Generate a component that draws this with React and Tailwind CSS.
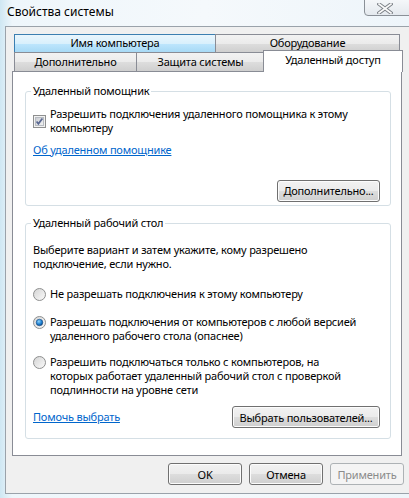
import React from "react";

function Btn({ children, className = "", disabled }) {
  return (
    <button
      className={`h-[22px] rounded-[3px] border text-[11px] leading-none ${
        disabled
          ? "border-[#adb2b5] bg-[#f4f4f4] text-[#8b8b8b]"
          : "border-[#707070] bg-[linear-gradient(#f2f2f2_0%,#ebebeb_48%,#dddddd_52%,#cfcfcf_100%)] text-black shadow-[inset_0_0_0_1px_#fcfcfc]"
      } ${className}`}
    >
      {children}
    </button>
  );
}

function Check() {
  return (
    <svg width="13" height="13" viewBox="0 0 13 13" className="shrink-0">
      <defs>
        <linearGradient id="cbg" x1="0" y1="0" x2="1" y2="1">
          <stop offset="0" stopColor="#c9ccd2" />
          <stop offset="1" stopColor="#f4f4f4" />
        </linearGradient>
      </defs>
      <rect x="0.5" y="0.5" width="12" height="12" fill="#f2f2f2" stroke="#8e8f8f" />
      <rect x="2.5" y="2.5" width="8" height="8" fill="url(#cbg)" stroke="#b8bcc2" />
      <path d="M3.6 6.4 L5.4 8.8 L9.4 3.4" stroke="#5a6892" strokeWidth="1.7" fill="none" />
    </svg>
  );
}

function Radio({ checked }) {
  return (
    <svg width="13" height="13" viewBox="0 0 13 13" className="mt-[1px] shrink-0">
      <defs>
        <linearGradient id="rbg" x1="0" y1="0" x2="1" y2="1">
          <stop offset="0" stopColor="#d3d3d3" />
          <stop offset="1" stopColor="#fbfbfb" />
        </linearGradient>
        <radialGradient id="rdot" cx="0.4" cy="0.35" r="0.7">
          <stop offset="0" stopColor="#8fd3fb" />
          <stop offset="0.6" stopColor="#1b7ed0" />
          <stop offset="1" stopColor="#0a3f78" />
        </radialGradient>
      </defs>
      <circle cx="6.5" cy="6.5" r="6" fill="url(#rbg)" stroke="#8e8f8f" />
      {checked && <circle cx="6.5" cy="6.5" r="3.3" fill="url(#rdot)" stroke="#1c4f86" strokeWidth="0.6" />}
    </svg>
  );
}

function Group({ title, className = "", children }) {
  return (
    <div className={`relative ml-[12px] w-[366px] rounded-[3px] border border-[#d5dfe5] ${className}`}>
      <span className="absolute left-[5px] top-[-8px] bg-white px-[2px] leading-[14px]">{title}</span>
      {children}
    </div>
  );
}

const Link = ({ children }) => (
  <a href="#" className="text-[#0066cc] underline leading-[14px]">
    {children}
  </a>
);

export default function App() {
  return (
    <div className="relative h-[498px] w-[409px] overflow-hidden bg-[linear-gradient(90deg,#cfe7f3_0%,#eef6fb_3%,#f5f9fc_50%,#eef5fa_100%)] font-['Noto_Sans',sans-serif] text-[11px] tracking-[-0.2px] text-black">
      <div className="flex h-[26px] items-center pb-[2px] pl-[7px] text-[12px] tracking-normal [text-shadow:0_0_6px_#fff]">
        Свойства системы
      </div>
      <div className="absolute right-[-4px] top-[-3px] flex h-[19px] w-[49px] items-center justify-center rounded-b-[4px] border border-[#8a9097] bg-[linear-gradient(#f7f9fb,#e4e9ee)] pr-[8px] pt-[3px]">
        <svg width="16" height="11" viewBox="0 0 16 11">
          <path d="M2 1 L14 10 M14 1 L2 10" stroke="#7d8288" strokeWidth="3.6" strokeLinecap="square" />
          <path d="M2 1 L14 10 M14 1 L2 10" stroke="#fbfbfb" strokeWidth="1.6" strokeLinecap="square" />
        </svg>
      </div>

      <div className="ml-[5px] h-[468px] w-[410px] border-b border-l border-t border-[#9aa2aa] bg-[#f0f0f0] pl-[6px] pt-[7px]">
        <div className="ml-[2px] flex h-[18px]">
          <div className="flex w-[202px] items-center justify-center border border-b-0 border-[#3c7fb1] bg-[linear-gradient(#eaf6fd_0%,#d9f0fc_50%,#bee6fd_51%,#a7d9f5_100%)]">
            Имя компьютера
          </div>
          <div className="-ml-px flex w-[185px] items-center justify-center border border-b-0 border-[#898c95] bg-[linear-gradient(#f2f2f2_0%,#ebebeb_50%,#dddddd_51%,#cfcfcf_100%)]">
            Оборудование
          </div>
        </div>
        <div className="ml-[2px] flex h-[19px] items-end">
          <div className="flex h-[19px] w-[123px] items-center justify-center border border-b-0 border-[#898c95] bg-[linear-gradient(#f2f2f2_0%,#ebebeb_50%,#dddddd_51%,#cfcfcf_100%)]">
            Дополнительно
          </div>
          <div className="-ml-px flex h-[19px] w-[129px] items-center justify-center border border-b-0 border-[#898c95] bg-[linear-gradient(#f2f2f2_0%,#ebebeb_50%,#dddddd_51%,#cfcfcf_100%)]">
            Защита системы
          </div>
          <div className="relative z-10 -mb-px -ml-[2px] flex h-[22px] w-[140px] items-center justify-center border border-b-0 border-[#898c95] bg-white pb-[2px]">
            Удаленный доступ
          </div>
        </div>

        <div className="h-[385px] w-[390px] border border-[#898c95] bg-white">
          <Group title="Удаленный помощник" className="mt-[19px] h-[115px]">
            <div className="flex items-center gap-[4px] pl-[7px] pt-[15px]">
              <Check />
              <div className="leading-[14px]">
                Разрешить подключения удаленного помощника к этому
                <br />
                компьютеру
              </div>
            </div>
            <div className="mt-[7px] pl-[7px]">
              <Link>Об удаленном помощнике</Link>
            </div>
            <div className="mr-[10px] mt-[21px] flex justify-end">
              <Btn className="w-[103px]">Дополнительно...</Btn>
            </div>
          </Group>

          <Group title="Удаленный рабочий стол" className="mt-[17px] h-[216px]">
            <div className="pl-[7px] pt-[19px] leading-[14px]">
              Выберите вариант и затем укажите, кому разрешено
              <br />
              подключение, если нужно.
            </div>
            <div className="mt-[16px] flex items-start gap-[4px] pl-[7px] leading-[14px]">
              <Radio />
              <div>Не разрешать подключения к этому компьютеру</div>
            </div>
            <div className="mt-[14px] flex items-start gap-[4px] pl-[7px] leading-[14px]">
              <Radio checked />
              <div>
                Разрешать подключения от компьютеров с любой версией
                <br />
                удаленного рабочего стола (опаснее)
              </div>
            </div>
            <div className="mt-[12px] flex items-start gap-[4px] pl-[7px] leading-[14px]">
              <Radio />
              <div>
                Разрешить подключаться только с компьютеров, на
                <br />
                которых работает удаленный рабочий стол с проверкой
                <br />
                подлинности на уровне сети
              </div>
            </div>
            <div className="mr-[10px] mt-[9px] flex items-center justify-between pl-[7px]">
              <Link>Помочь выбрать</Link>
              <Btn className="w-[148px]">Выбрать пользователей...</Btn>
            </div>
          </Group>
        </div>

        <div className="mt-[7px] flex w-[392px] justify-end gap-[7px]">
          <Btn className="w-[74px]">OK</Btn>
          <Btn className="w-[74px]">Отмена</Btn>
          <Btn className="w-[74px]" disabled>
            Применить
          </Btn>
        </div>
      </div>
    </div>
  );
}
